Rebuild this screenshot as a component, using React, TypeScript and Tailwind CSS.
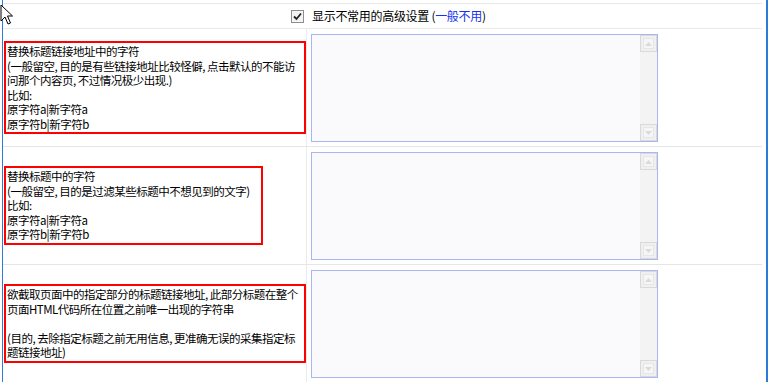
import React from 'react';

const textFont = { fontFamily: '"Noto Sans CJK SC", "Noto Sans", sans-serif' };

// faded classic scrollbar drawn inside the textarea
const ScrollButton: React.FC<{ up?: boolean }> = ({ up }) => (
  <div className="w-[17px] h-[17px] border border-[#d9d9d9] bg-[#f0f0f0] flex items-center justify-center">
    <div className="w-[11px] h-[11px] border border-[#e6e6e6] bg-[#f6f6f6] flex items-center justify-center">
      <svg width="7" height="4" viewBox="0 0 7 4">
        <path d={up ? 'M0 4 L3.5 0 L7 4 Z' : 'M0 0 L3.5 4 L7 0 Z'} fill="#dadada" />
      </svg>
    </div>
  </div>
);

const FakeTextarea: React.FC = () => (
  <div className="w-[347px] h-[108px] border border-[#aab6f2] bg-[#fafafd] flex justify-end">
    <div className="w-[17px] h-full bg-[#f3f3f3] flex flex-col justify-between">
      <ScrollButton up />
      <ScrollButton />
    </div>
  </div>
);

interface RowProps {
  lines: string[];
  boxWidth: string;
}

const OptionRow: React.FC<RowProps> = ({ lines, boxWidth }) => (
  <div className="grid grid-cols-[304px_1fr] h-[118px] border-b border-[#e6e6e6]">
    <div className="flex items-center border-r border-[#ececec] pl-[1px]">
      <div className={`${boxWidth} border-2 border-[#ff0000] px-[1px] py-[1px] text-[11.5px] leading-[14.5px] tracking-[-0.5px] text-black whitespace-nowrap`}>
        {lines.map((l, i) => (
          <div key={i} className="h-[14.5px]">{l}</div>
        ))}
      </div>
    </div>
    <div className="pl-[4px] pt-[5px]">
      <FakeTextarea />
    </div>
  </div>
);

export default function App() {
  return (
    <div className="relative w-[770px] h-[382px] overflow-hidden bg-white" style={textFont}>
      <div className="flex h-full">
        <div className="w-[2px]" />
        <div className="w-px bg-[#2f7bd8]" />
        <div className="w-[759px]">
          <div className="mt-[3px] border-t border-[#e8e8e8]" />
          <div className="h-[25px] border-b border-[#eaeae4] flex items-center pl-[288px]">
            <div className="w-[13px] h-[13px] border border-[#8e8f8f] bg-[#f4f4f4] flex items-center justify-center">
              <svg width="9" height="9" viewBox="0 0 9 9">
                <path d="M1 4.5 L3.5 7 L8 1.5" stroke="#222" strokeWidth="1.8" fill="none" />
              </svg>
            </div>
            <span className="ml-[8px] text-[12px] tracking-[-0.3px] text-black whitespace-nowrap">
              显示不常用的高级设置 (<span className="text-[#1432f0]">一般不用</span>)
            </span>
          </div>
          <OptionRow
            boxWidth="w-[302px]"
            lines={[
              '替换标题链接地址中的字符',
              '(一般留空, 目的是有些链接地址比较怪僻, 点击默认的不能访',
              '问那个内容页, 不过情况极少出现.)',
              '比如:',
              '原字符a|新字符a',
              '原字符b|新字符b',
            ]}
          />
          <OptionRow
            boxWidth="w-[259px]"
            lines={[
              '替换标题中的字符',
              '(一般留空, 目的是过滤某些标题中不想见到的文字)',
              '比如:',
              '原字符a|新字符a',
              '原字符b|新字符b',
            ]}
          />
          <OptionRow
            boxWidth="w-[303px]"
            lines={[
              '欲截取页面中的指定部分的标题链接地址, 此部分标题在整个',
              '页面HTML代码所在位置之前唯一出现的字符串',
              '',
              '(目的, 去除指定标题之前无用信息, 更准确无误的采集指定标',
              '题链接地址)',
            ]}
          />
        </div>
        <div className="w-[4px]" />
        <div className="w-[2px] bg-[#2b7bd8]" />
      </div>
      {/* mouse pointer left in the capture */}
      <svg className="absolute left-0 top-0" width="14" height="27" viewBox="0 0 14 27">
        <path d="M1 5 L1 21 L5 17 L8 24 L10.5 23 L7.5 16 L12.5 16 Z" fill="#fff" stroke="#000" strokeWidth="1" strokeLinejoin="miter" />
      </svg>
    </div>
  );
}
